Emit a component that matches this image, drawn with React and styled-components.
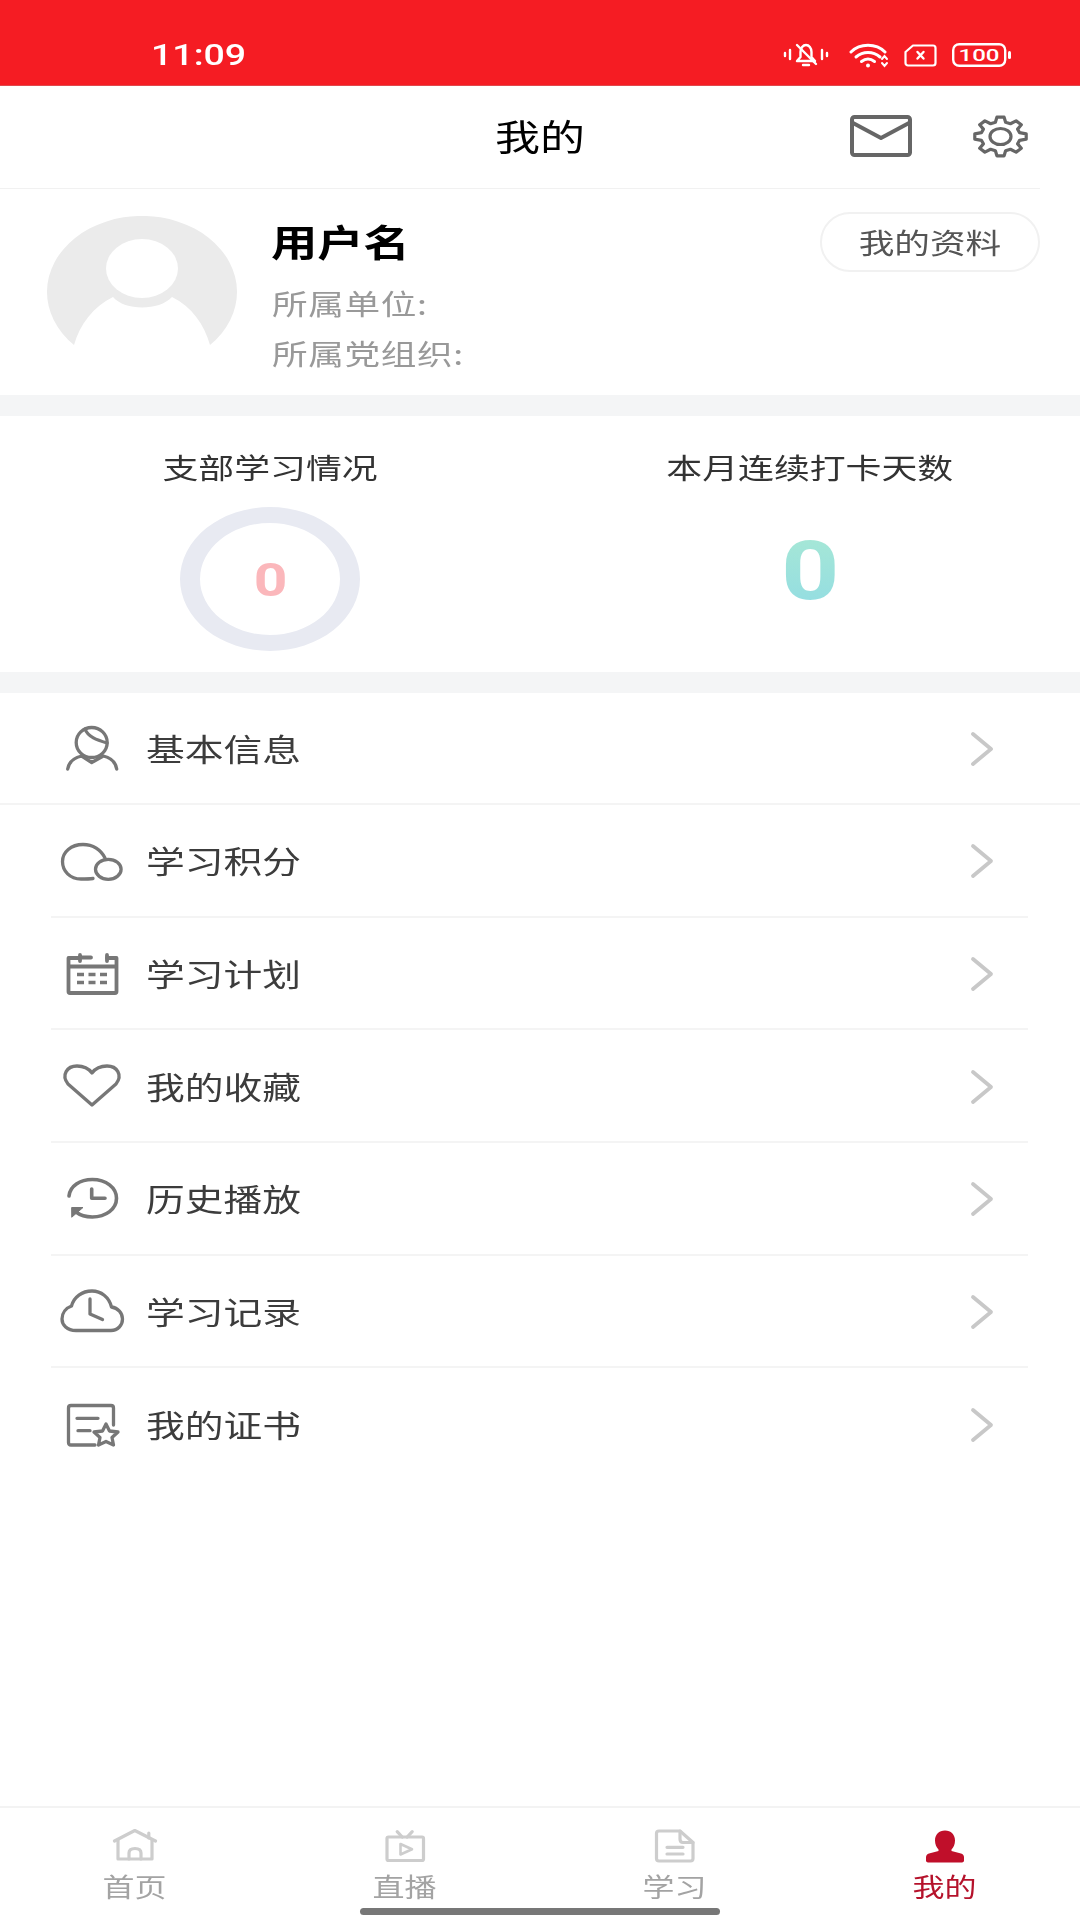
import React from 'react';
import styled, { createGlobalStyle } from 'styled-components';

const GlobalStyle = createGlobalStyle`
  html, body {
    margin: 0;
    padding: 0;
    background: #fff;
  }
  * {
    box-sizing: border-box;
  }
`;

const Page = styled.div`
  width: 1080px;
  height: 1920px;
  display: flex;
  flex-direction: column;
  overflow: hidden;
  background: #fff;
  font-family: "Noto Sans CJK SC", "Noto Sans", sans-serif;
`;

// the whole screenshot is stretched sideways, so glyphs get widened too
const Wide = styled.span`
  display: inline-block;
  white-space: nowrap;
  transform: scaleX(1.25);
  transform-origin: ${(p) => p.$origin || 'left'} center;
`;

const StatusBar = styled.div`
  height: 86px;
  flex: none;
  display: flex;
  align-items: center;
  padding: 25px 68px 0 151px;
  background: #f51c23;
  border-bottom: 1px solid #e0484c;
`;

const Time = styled(Wide)`
  font-family: Roboto, sans-serif;
  font-size: 30px;
  font-weight: 500;
  line-height: 40px;
  color: #fff;
`;

const StatusIcons = styled.div`
  margin-left: auto;
  display: flex;
  align-items: center;
`;

const StatusSlot = styled.div`
  display: flex;
  margin-left: ${(p) => p.$gap || 0}px;
`;

const Header = styled.div`
  position: relative;
  height: 103px;
  flex: none;
  display: grid;
  grid-template-columns: 1fr auto 1fr;
  align-items: center;

  &::after {
    content: '';
    position: absolute;
    left: 0;
    right: 40px;
    bottom: 0;
    height: 1px;
    background: #f1f1f1;
  }
`;

const Title = styled(Wide)`
  grid-column: 2;
  font-size: 36px;
  line-height: 50px;
  color: #000;
  margin-bottom: 6px;
`;

const HeaderActions = styled.div`
  grid-column: 3;
  justify-self: end;
  display: flex;
  align-items: center;
  gap: 61px;
  padding: 0 52px 3px 0;
`;

const Profile = styled.div`
  height: 206px;
  flex: none;
  display: flex;
  align-items: flex-start;
  padding: 23px 40px 0 47px;
`;

const AvatarSvg = styled.svg`
  flex: none;
  margin-top: 4px;
`;

const ProfileText = styled.div`
  margin-left: 34px;
  padding-top: 4px;
  display: flex;
  flex-direction: column;
`;

const UserName = styled(Wide)`
  font-size: 37px;
  font-weight: 700;
  line-height: 50px;
  color: #000;
  margin-bottom: 12px;
`;

const InfoLine = styled(Wide)`
  font-size: 28.5px;
  letter-spacing: 0.5px;
  line-height: 50px;
  margin-left: 1px;
  color: #999;
`;

const ProfileButton = styled.div`
  margin-left: auto;
  width: 220px;
  height: 60px;
  display: flex;
  align-items: center;
  justify-content: center;
  border: 2px solid #f1f1f1;
  border-radius: 30px;
`;

const ButtonLabel = styled(Wide)`
  font-size: 28.5px;
  line-height: 40px;
  color: #555;
`;

const Band = styled.div`
  height: 21px;
  flex: none;
  background: #f4f5f6;
`;

const Stats = styled.div`
  height: 256px;
  flex: none;
  display: grid;
  grid-template-columns: 1fr 1fr;
  padding-top: 31px;
`;

const StatColumn = styled.div`
  display: flex;
  flex-direction: column;
  align-items: center;
`;

const StatTitle = styled(Wide)`
  font-size: 28.7px;
  line-height: 40px;
  color: #333;
`;

const Ring = styled.div`
  width: 180px;
  height: 144px;
  margin-top: 20px;
  display: flex;
  align-items: center;
  justify-content: center;
  border-style: solid;
  border-color: #e8eaf2;
  border-width: 16px 20px;
  border-radius: 50%;
`;

const RingValue = styled(Wide)`
  font-family: Roboto, sans-serif;
  font-size: 47px;
  font-weight: 700;
  line-height: 56px;
  margin-top: 2px;
  color: #fbb7bb;
`;

const StreakValue = styled(Wide)`
  font-family: Roboto, sans-serif;
  font-size: 81px;
  font-weight: 700;
  line-height: 100px;
  margin-top: 35px;
  background: linear-gradient(180deg, #a9e9d4, #90dbe4);
  -webkit-background-clip: text;
  background-clip: text;
  color: transparent;
`;

const MenuList = styled.div`
  flex: 1;
  display: flex;
  flex-direction: column;
`;

const MenuRow = styled.div`
  height: ${(p) => (p.$first ? 112 : 112.7)}px;
  flex: none;
  display: flex;
  align-items: center;
  margin: ${(p) => (p.$first ? '0' : '0 52px 0 51px')};
  padding: ${(p) => (p.$first ? '2px 86px 0 51px' : '2px 34px 0 0')};
  border-bottom: 2px solid ${(p) => (p.$last ? 'transparent' : '#f4f4f4')};
`;

const MenuIconSvg = styled.svg`
  flex: none;
  fill: none;
  stroke: #777;
  stroke-width: 3.3;
  stroke-linecap: round;
  stroke-linejoin: round;
`;

const MenuLabel = styled(Wide)`
  margin: -2px 0 0 13px;
  font-size: 31px;
  line-height: 44px;
  color: #3c3c3c;
`;

const Chevron = styled.svg`
  flex: none;
  margin-left: auto;
  fill: none;
  stroke: #c8c8c8;
  stroke-width: 3.8;
  stroke-linecap: round;
  stroke-linejoin: round;
`;

const TabBar = styled.div`
  height: 114px;
  flex: none;
  display: flex;
  flex-direction: column;
  border-top: 2px solid #f3f3f3;
`;

const TabRow = styled.div`
  display: grid;
  grid-template-columns: repeat(4, 1fr);
  padding-top: 21px;
`;

const Tab = styled.div`
  display: flex;
  flex-direction: column;
  align-items: center;
`;

const TabIconSvg = styled.svg`
  display: block;
  fill: none;
  stroke: #cdcdcd;
  stroke-width: 3.2;
  stroke-linecap: round;
  stroke-linejoin: round;
`;

const PersonTabSvg = styled.svg`
  display: block;
  fill: #c00f2a;
`;

const TabLabel = styled(Wide)`
  margin-top: 5px;
  font-size: 25.6px;
  line-height: 36px;
  color: ${(p) => (p.$active ? '#b5122b' : '#a3a3a3')};
`;

const HomeIndicator = styled.div`
  width: 360px;
  height: 7px;
  margin: 4px auto 0;
  border-radius: 4px;
  background: #777;
`;

// 8 toothed gear, worked out once
const gearPath = (() => {
  const cx = 27.5;
  const cy = 21.5;
  const pts = [];
  for (let i = 0; i < 8; i += 1) {
    const a = i * 45 - 90;
    [[-15, 0.76], [-8, 1], [8, 1], [15, 0.76]].forEach(([d, r]) => {
      const rad = ((a + d) * Math.PI) / 180;
      pts.push(`${(cx + Math.cos(rad) * 26 * r).toFixed(1)} ${(cy + Math.sin(rad) * 19.5 * r).toFixed(1)}`);
    });
  }
  return `M${pts.join(' L')} Z`;
})();

const BellIcon = () => (
  <svg width="46" height="26" viewBox="0 0 46 26" fill="none" stroke="#fff" strokeWidth="2.4" strokeLinecap="round" strokeLinejoin="round">
    <path d="M2 11v3M7 8v9M39 8v9M44 11v3" />
    <path d="M14 19h18l-3.5-4v-5c0-4-2.5-7-5.5-7s-5.5 3-5.5 7v5z" />
    <path d="M20 23h6" />
    <path d="M14 3l19 19" />
  </svg>
);

const WifiIcon = () => (
  <svg width="41" height="25" viewBox="0 0 41 25" fill="none" stroke="#fff" strokeWidth="3" strokeLinecap="round">
    <path d="M2 9C11 0 27 0 36 9" />
    <path d="M7 14c7-6 17-6 24 0" />
    <path d="M12.5 18.5c4-3 9-3 13 0" />
    <circle cx="19" cy="22.5" r="2" fill="#fff" stroke="none" />
    <path d="M33 16l2.5-3 2.5 3M33 20l2.5 3 2.5-3" strokeWidth="2" />
  </svg>
);

const SimIcon = () => (
  <svg width="33" height="23" viewBox="0 0 33 23" fill="none" stroke="#fff" strokeLinecap="round" strokeLinejoin="round">
    <path d="M9 1.5h20a2.5 2.5 0 0 1 2.5 2.5v15a2.5 2.5 0 0 1-2.5 2.5H4A2.5 2.5 0 0 1 1.500 19V8z" strokeWidth="2.200" />
    <path d="M13.500 8l6 6.500M19.500 8l-6 6.500" strokeWidth="2.400" />
  </svg>
);

const BatteryIcon = () => (
  <svg width="60" height="24" viewBox="0 0 60 24">
    <rect x="1.200" y="1.200" width="52" height="21.600" rx="6" fill="none" stroke="#fff" strokeWidth="2.400" />
    <rect x="56" y="8" width="3" height="8" rx="1.500" fill="#fff" />
    <text x="27" y="18" textAnchor="middle" fontFamily="Roboto, sans-serif" fontWeight="500" fontSize="17" fill="#fff" textLength="41" lengthAdjust="spacingAndGlyphs">100</text>
  </svg>
);

const MailIcon = () => (
  <svg width="62" height="42" viewBox="0 0 62 42" fill="none" stroke="#666" strokeWidth="4" strokeLinejoin="round">
    <rect x="2" y="2" width="58" height="38" rx="2.500" />
    <path d="M3 8l28 15L59 8" />
  </svg>
);

const GearIcon = () => (
  <svg width="55" height="43" viewBox="0 0 55 43" fill="none" stroke="#666" strokeWidth="3.200" strokeLinejoin="round">
    <path d={gearPath} />
    <ellipse cx="27.500" cy="21.500" rx="10.500" ry="8" />
  </svg>
);

const Avatar = () => (
  <AvatarSvg width="190" height="132" viewBox="0 0 190 132">
    <path
      fill="#ebebeb"
      d="M27 129A95 76 0 1 1 163 129C157 108 145 91 125 81C112 95 78 95 66 81C46 91 33 108 27 129Z"
    />
    <ellipse cx="95" cy="52.500" rx="36" ry="29.500" fill="#fff" />
  </AvatarSvg>
);

const menuIcons = {
  person: (
    <>
      <ellipse cx="40.700" cy="23.500" rx="15.500" ry="15" />
      <path d="M34 10C37 18 46 21 56 24" />
      <path d="M16.700 50c1-7 6-11 14-13l10 6.500 11.600-6.500c8 2 12.400 6 13.400 13" />
    </>
  ),
  points: (
    <>
      <path d="M42 47.500C38 48 34 48 30 48C19 48 11.500 40 11.500 30.500C11.500 21 20 13.500 32 13.500C42 13.500 50 19 54 27" />
      <ellipse cx="57.300" cy="38.300" rx="12.800" ry="10" />
    </>
  ),
  calendar: (
    <>
      <path d="M29 14H17.500V47.500a1.500 1.500 0 0 0 1.500 1.500H64a1.500 1.500 0 0 0 1.500-1.500V14H56" strokeWidth="3.800" />
      <path d="M31 13.500h9M29 11v6M56 11v6M18 22.500h47" strokeWidth="3.800" />
      <path d="M26 30.500h7M37.500 30.500h7M49 30.500h7M26 38.500h7M37.500 38.500h7M49 38.500h7" strokeWidth="3.600" strokeLinecap="butt" />
    </>
  ),
  heart: (
    <path d="M41 48L17 27C10 18 16 9 26 9C33 9 38 12 41 16C44 12 49 9 56 9C66 9 72 18 65 27Z" />
  ),
  history: (
    <>
      <path d="M18 27C19 17 29 10.500 41.300 10.500C55 10.500 65.500 18.500 65.500 29.300C65.500 40 55 48 41.300 48C35 48 29.500 46.500 25 43" strokeWidth="3.600" />
      <path d="M40.700 20V29.300H54" strokeWidth="3.600" />
      <path d="M21 38.500H32L21 48Z" fill="#777" strokeWidth="1" />
    </>
  ),
  cloud: (
    <>
      <path d="M25 48.500H60C67 48.500 71.500 43 71.500 37C71.500 31 67 26 60.500 25C58 15 50 9 41 9C31 9 23 15 20.500 24C15 26 11 31 11 37C11 43 16 48.500 25 48.500Z" />
      <path d="M39 17V32L51.500 37.500" />
    </>
  ),
  certificate: (
    <>
      <path d="M44 50H20Q17.500 50 17.500 47.500V13Q17.500 10.500 20 10.500H60Q62.500 10.500 62.500 13V30" />
      <path d="M26 23.300H47M27 35.700H39" />
      <path d="M55 29L58.500 36L67 37L61 42.500L62.500 50L55 46.500L47.500 50L49 42.500L43 37L51.500 36Z" />
    </>
  ),
};

const menuItems = [
  { label: '基本信息', icon: 'person' },
  { label: '学习积分', icon: 'points' },
  { label: '学习计划', icon: 'calendar' },
  { label: '我的收藏', icon: 'heart' },
  { label: '历史播放', icon: 'history' },
  { label: '学习记录', icon: 'cloud' },
  { label: '我的证书', icon: 'certificate' },
];

const tabIcons = {
  home: (
    <>
      <path d="M3.500 12L23.800 1.500L44.500 12" />
      <path d="M37.800 4v5" />
      <path d="M7 11V30H41V11" />
      <path d="M18 30V24C18 21 20.500 19.500 24 19.500C27.500 19.500 30 21 30 24V30" />
    </>
  ),
  live: (
    <>
      <rect x="6" y="8" width="36.500" height="23.500" rx="1.500" />
      <path d="M16.200 2.700L21.200 8M31.200 2.700L26.200 8" />
      <path d="M19.500 15L31 20.300L19.500 25.500Z" strokeWidth="2.600" />
    </>
  ),
  study: (
    <>
      <path d="M8 2H29L42 13.500V29.500Q42 32 39.500 32H8Q5.500 32 5.500 29.500V4.500Q5.500 2 8 2Z" />
      <path d="M29 2V10Q29 13.500 32 13.500H42" />
      <path d="M16 18.300H32M16 25H32" />
    </>
  ),
};

const tabs = [
  { label: '首页', icon: 'home' },
  { label: '直播', icon: 'live' },
  { label: '学习', icon: 'study' },
  { label: '我的', icon: 'me', active: true },
];

const App = () => {
  return (
    <Page>
      <GlobalStyle />
      <StatusBar>
        <Time>11:09</Time>
        <StatusIcons>
          <StatusSlot><BellIcon /></StatusSlot>
          <StatusSlot $gap={20}><WifiIcon /></StatusSlot>
          <StatusSlot $gap={14}><SimIcon /></StatusSlot>
          <StatusSlot $gap={15}><BatteryIcon /></StatusSlot>
        </StatusIcons>
      </StatusBar>

      <Header>
        <Title $origin="center">我的</Title>
        <HeaderActions>
          <MailIcon />
          <GearIcon />
        </HeaderActions>
      </Header>

      <Profile>
        <Avatar />
        <ProfileText>
          <UserName>用户名</UserName>
          <InfoLine>所属单位:</InfoLine>
          <InfoLine>所属党组织:</InfoLine>
        </ProfileText>
        <ProfileButton>
          <ButtonLabel $origin="center">我的资料</ButtonLabel>
        </ProfileButton>
      </Profile>

      <Band />

      <Stats>
        <StatColumn>
          <StatTitle $origin="center">支部学习情况</StatTitle>
          <Ring>
            <RingValue $origin="center">0</RingValue>
          </Ring>
        </StatColumn>
        <StatColumn>
          <StatTitle $origin="center">本月连续打卡天数</StatTitle>
          <StreakValue $origin="center">0</StreakValue>
        </StatColumn>
      </Stats>

      <Band />

      <MenuList>
        {menuItems.map((item, i) => (
          <MenuRow key={item.label} $first={i === 0} $last={i === menuItems.length - 1}>
            <MenuIconSvg width="82" height="60" viewBox="0 0 82 60">
              {menuIcons[item.icon]}
            </MenuIconSvg>
            <MenuLabel>{item.label}</MenuLabel>
            <Chevron width="24" height="36" viewBox="0 0 24 36">
              <path d="M3 3l18 15L3 33" />
            </Chevron>
          </MenuRow>
        ))}
      </MenuList>

      <TabBar>
        <TabRow>
          {tabs.map((tab) => (
            <Tab key={tab.label}>
              {tab.active ? (
                <PersonTabSvg width="48" height="34" viewBox="0 0 48 34">
                  <path d="M24 1.500C30 1.500 34 5.500 34 11.500C34 15.500 32.500 18.500 30.500 20.500V22L40 24.500C42 25 43 26.500 43 28.500V31.500C43 32.800 42 33.500 41 33.500H7C6 33.500 5 32.800 5 31.500V28.500C5 26.500 6 25 8 24.500L17.500 22V20.500C15.500 18.500 14 15.500 14 11.500C14 5.500 18 1.500 24 1.500Z" />
                </PersonTabSvg>
              ) : (
                <TabIconSvg width="48" height="34" viewBox="0 0 48 34">
                  {tabIcons[tab.icon]}
                </TabIconSvg>
              )}
              <TabLabel $origin="center" $active={tab.active}>{tab.label}</TabLabel>
            </Tab>
          ))}
        </TabRow>
        <HomeIndicator />
      </TabBar>
    </Page>
  );
};

export default App;
